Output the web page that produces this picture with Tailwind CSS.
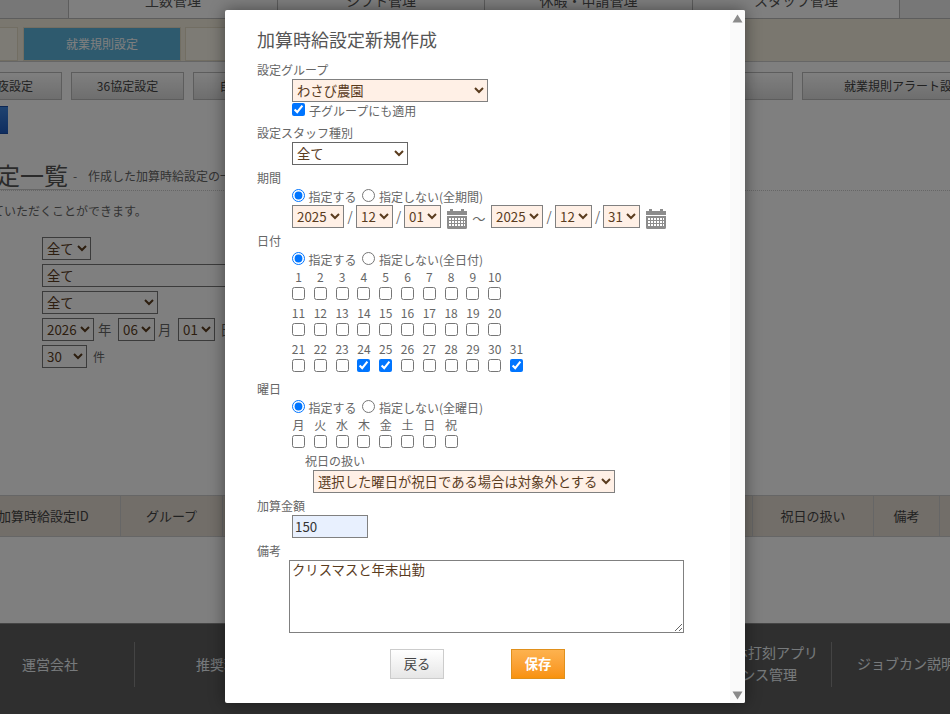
<!DOCTYPE html>
<html lang="ja">
<head>
    <meta charset="UTF-8">
    <meta name="viewport" content="width=device-width, initial-scale=1.0">
    <title>加算時給設定新規作成</title>
    <script src="https://cdn.jsdelivr.net/npm/@tailwindcss/browser@4"></script>
</head>
<body class="bg-white text-[#666] font-['Noto_Sans_CJK_JP','Noto_Sans',sans-serif] text-xs">
<div class="relative w-[950px] h-[714px] overflow-hidden">

    <!-- Page behind the dialog -->
    <div class="flex flex-col h-[714px]">
        <!-- Main nav -->
        <nav class="flex h-[37px] -mt-[18px] shrink-0 border-b border-[#bbb] text-sm text-[#555] bg-[#eee]">
            <div class="w-[68px] shrink-0"></div>
            <div class="w-[209px] shrink-0 flex items-center justify-center bg-white border-l border-[#bbb]">工数管理</div>
            <div class="w-[207px] shrink-0 flex items-center justify-center bg-white border-l border-[#bbb]">シフト管理</div>
            <div class="w-[208px] shrink-0 flex items-center justify-center bg-white border-l border-[#bbb]">休暇・申請管理</div>
            <div class="w-[208px] shrink-0 flex items-center justify-center bg-white border-x border-[#bbb]">スタッフ管理</div>
        </nav>

        <!-- Tabs -->
        <div class="flex h-[43px] shrink-0 items-end gap-[5px] -ml-[139px] bg-[#f5efdf] border-b border-[#ccc]">
            <div class="w-[157px] h-[34px] shrink-0 bg-[#fbf7ea] border border-[#e4dcc6]"></div>
            <div class="w-[158px] h-[34px] shrink-0 flex items-center justify-center bg-[#5cb4dc] text-white border border-[#e4dcc6] text-xs">就業規則設定</div>
            <div class="w-[158px] h-[34px] shrink-0 -ml-[1px] bg-[#fbf7ea] border border-[#e4dcc6]"></div>
        </div>

        <!-- Sub menu -->
        <div class="flex gap-[9px] -ml-[51px] mt-[10px] shrink-0 text-[#444]">
            <div class="w-[113px] h-[28px] shrink-0 flex items-center justify-center border border-[#bbb] bg-gradient-to-b from-white to-[#ddd]"><span class="pl-[7px] whitespace-nowrap">深夜設定</span></div>
            <div class="w-[113px] h-[28px] shrink-0 flex items-center justify-center border border-[#bbb] bg-gradient-to-b from-white to-[#ddd]">36協定設定</div>
            <div class="w-[113px] h-[28px] shrink-0 flex items-center justify-center border border-[#bbb] bg-gradient-to-b from-white to-[#ddd]"><span class="pl-[12px] whitespace-nowrap">自動休憩設定</span></div>
            <div class="w-[478px] h-[28px] shrink-0 border border-[#bbb] bg-gradient-to-b from-white to-[#ddd]"></div>
            <div class="w-[204px] h-[28px] shrink-0 flex items-center justify-center border border-[#bbb] bg-gradient-to-b from-white to-[#ddd]">就業規則アラート設定</div>
        </div>

        <div class="w-[8px] h-[28px] mt-[6px] shrink-0 bg-gradient-to-b from-[#3f86e0] to-[#1f5cc0] border-y border-[#1b4fa8]"></div>

        <!-- Heading -->
        <div class="flex items-end h-[39px] mt-[18px] -ml-[124px] shrink-0 border-b border-dotted border-[#ccc] w-[1074px]">
            <h1 class="text-2xl text-[#555] h-[39px] leading-[47px] w-[194px] shrink-0 border-b border-[#ccc] whitespace-nowrap">加算時給設定一覧</h1>
            <span class="w-[18px] h-[38px] leading-[48px] pl-[3px] shrink-0">-</span>
            <span class="h-[38px] leading-[48px] whitespace-nowrap">作成した加算時給設定の一覧です。</span>
        </div>
        <p class="mt-[11px] -ml-[8px] h-[18px] leading-[18px] shrink-0 whitespace-nowrap">ていただくことができます。</p>

        <!-- Search -->
        <div class="ml-[42px] mt-[17px] flex flex-col gap-[4px] shrink-0 items-start">
            <select class="w-[49px] h-[23px] border border-[#777] text-[13.333px] text-[#5a3c1e]"><option>全て</option></select>
            <select class="w-[300px] h-[23px] border border-[#777] text-[13.333px] text-[#5a3c1e]"><option>全て</option></select>
            <select class="w-[116px] h-[23px] border border-[#777] text-[13.333px] text-[#5a3c1e]"><option>全て</option></select>
            <div class="flex items-center h-[23px]">
                <select class="w-[52px] h-[23px] border border-[#777] text-[13.333px] text-[#5a3c1e]"><option>2026</option></select>
                <span class="w-[24px] pl-[4px] text-[13.333px]">年</span>
                <select class="w-[37px] h-[23px] border border-[#777] text-[13.333px] text-[#5a3c1e]"><option>06</option></select>
                <span class="w-[23px] pl-[3px] text-[13.333px]">月</span>
                <select class="w-[37px] h-[23px] border border-[#777] text-[13.333px] text-[#5a3c1e]"><option>01</option></select>
                <span class="w-[24px] pl-[5px] text-[13.333px]">日</span>
            </div>
            <div class="flex items-center h-[23px]">
                <select class="w-[45px] h-[23px] border border-[#777] text-[13.333px] text-[#5a3c1e]"><option>30</option></select>
                <span class="w-[24px] text-center">件</span>
            </div>
        </div>

        <!-- Table header -->
        <div class="flex h-[42px] mt-[127px] shrink-0 bg-[#e4dcd2] border-y border-[#ccc] text-[13px] text-[#444]">
            <div class="w-[121px] shrink-0 flex items-center border-r border-[#ccc] whitespace-nowrap"><span class="-ml-[2px]">加算時給設定ID</span></div>
            <div class="w-[102px] shrink-0 flex items-center justify-center border-r border-[#ccc]">グループ</div>
            <div class="w-[530px] shrink-0 border-r border-[#ccc]"></div>
            <div class="w-[121px] shrink-0 flex items-center justify-center border-r border-[#ccc]">祝日の扱い</div>
            <div class="w-[66px] shrink-0 flex items-center justify-center border-r border-[#ccc]">備考</div>
        </div>

        <!-- Footer -->
        <footer class="flex items-start h-[91px] pt-[18px] mt-[86px] shrink-0 bg-[#5f5f5f] border-t border-[#8a8a8a] text-sm text-[#eef4f8] whitespace-nowrap">
            <div class="w-[135px] h-[45px] shrink-0 flex items-center pl-[22px] pb-[2px] border-r border-[#888]">運営会社</div>
            <div class="w-[697px] h-[45px] shrink-0 flex items-center justify-between border-r border-[#888]">
                <span class="pl-[61px] pb-[2px]">推奨環境</span>
                <div class="flex flex-col items-end pr-[13px] pb-[4px] leading-[22px]">
                    <span>スマホ打刻アプリ</span>
                    <span class="pr-[21px]">ライセンス管理</span>
                </div>
            </div>
            <div class="h-[45px] leading-[43px] pl-[25px]">ジョブカン説明</div>
        </footer>
    </div>

    <!-- Overlay -->
    <div class="absolute inset-0 bg-black/50"></div>

    <!-- Dialog -->
    <div class="absolute left-[225px] top-[10px] w-[520px] h-[693px] bg-white rounded-[2px] shadow-[0_0_16px_rgba(0,0,0,0.45)] overflow-hidden">
        <!-- Scrollbar -->
        <div class="absolute right-0 top-0 bottom-0 w-[15px] bg-[#fafafa]">
            <svg class="absolute left-[2px] top-[4px]" width="11" height="9" viewBox="0 0 11 9"><path d="M5.5 0.5L10.5 8.500H0.5Z" fill="#8a8a8a"/></svg>
            <svg class="absolute left-[2px] bottom-[3px]" width="11" height="9" viewBox="0 0 11 9"><path d="M0.5 0.5H10.5L5.5 8.500Z" fill="#8a8a8a"/></svg>
        </div>

        <div class="pl-[32px] pt-[17px] flex flex-col items-start">
            <h2 class="h-[26px] leading-[24px] text-lg text-[#555]">加算時給設定新規作成</h2>

            <!-- Group -->
            <label class="h-[18px] leading-[18px] mt-[8px]">設定グループ</label>
            <select class="ml-[35px] w-[196px] h-[23px] border border-[#808080] bg-[#fff0e6] text-[13.333px] text-[#5a3c1e]"><option>わさび農園</option></select>
            <div class="ml-[35px] flex items-start h-[18px]">
                <input type="checkbox" checked class="mt-[1px] w-[13px] h-[13px]">
                <span class="ml-[4px] leading-[18px]">子グループにも適用</span>
            </div>

            <!-- Staff type -->
            <label class="h-[18px] leading-[18px] mt-[4px]">設定スタッフ種別</label>
            <select class="ml-[35px] w-[116px] h-[23px] border border-[#666] text-[13.333px] text-[#5a3c1e]"><option>全て</option></select>

            <!-- Period -->
            <label class="h-[18px] leading-[18px] mt-[4px]">期間</label>
            <div class="ml-[35px] flex items-start h-[18px] leading-[20px]">
                <input type="radio" name="period" checked class="mt-[2px] w-[13px] h-[13px]">
                <span class="ml-[3.5px]">指定する</span>
                <input type="radio" name="period" class="ml-[5.5px] mt-[2px] w-[13px] h-[13px]">
                <span class="ml-[4px]">指定しない(全期間)</span>
            </div>
            <div class="ml-[35px] flex items-start h-[23px] text-[13.333px]">
                <select class="w-[52px] h-[23px] border border-[#808080] bg-[#fff0e6] text-[#5a3c1e]"><option>2025</option></select>
                <span class="w-[12px] h-[23px] leading-[23px] text-center">/</span>
                <select class="w-[37px] h-[23px] border border-[#808080] bg-[#fff0e6] text-[#5a3c1e]"><option>12</option></select>
                <span class="w-[11px] h-[23px] leading-[23px] text-center">/</span>
                <select class="w-[37px] h-[23px] border border-[#808080] bg-[#fff0e6] text-[#5a3c1e]"><option>01</option></select>
                <svg class="ml-[6px] mt-[3px] shrink-0" width="20" height="21" viewBox="0 0 20 21"><path fill="#8c8c8c" fill-rule="evenodd" d="M0 3h3V1h3v2h8V1h3v2h3v4H0zM0 8h20v11.500a1.500 1.500 0 0 1-1.500 1.500H1.500A1.500 1.500 0 0 1 0 19.500zM2 10v2h2v-2zM5 10v2h2v-2zM8 10v2h2v-2zM11 10v2h2v-2zM14 10v2h2v-2zM17 10v2h1v-2zM2 13v2h2v-2zM5 13v2h2v-2zM8 13v2h2v-2zM11 13v2h2v-2zM14 13v2h2v-2zM17 13v2h1v-2zM2 16v2h2v-2zM5 16v2h2v-2zM8 16v2h2v-2zM11 16v2h2v-2zM14 16v2h2v-2zM17 16v2h1v-2z"/></svg>
                <span class="w-[24px] h-[23px] leading-[27px] text-center">～</span>
                <select class="w-[52px] h-[23px] border border-[#808080] bg-[#fff0e6] text-[#5a3c1e]"><option>2025</option></select>
                <span class="w-[12px] h-[23px] leading-[23px] text-center">/</span>
                <select class="w-[37px] h-[23px] border border-[#808080] bg-[#fff0e6] text-[#5a3c1e]"><option>12</option></select>
                <span class="w-[11px] h-[23px] leading-[23px] text-center">/</span>
                <select class="w-[37px] h-[23px] border border-[#808080] bg-[#fff0e6] text-[#5a3c1e]"><option>31</option></select>
                <svg class="ml-[6px] mt-[3px] shrink-0" width="20" height="21" viewBox="0 0 20 21"><path fill="#8c8c8c" fill-rule="evenodd" d="M0 3h3V1h3v2h8V1h3v2h3v4H0zM0 8h20v11.500a1.500 1.500 0 0 1-1.500 1.500H1.500A1.500 1.500 0 0 1 0 19.500zM2 10v2h2v-2zM5 10v2h2v-2zM8 10v2h2v-2zM11 10v2h2v-2zM14 10v2h2v-2zM17 10v2h1v-2zM2 13v2h2v-2zM5 13v2h2v-2zM8 13v2h2v-2zM11 13v2h2v-2zM14 13v2h2v-2zM17 13v2h1v-2zM2 16v2h2v-2zM5 16v2h2v-2zM8 16v2h2v-2zM11 16v2h2v-2zM14 16v2h2v-2zM17 16v2h1v-2z"/></svg>
            </div>

            <!-- Days -->
            <label class="h-[18px] leading-[18px] mt-[4px]">日付</label>
            <div class="ml-[35px] flex items-start h-[18px] leading-[20px]">
                <input type="radio" name="days" checked class="mt-[2px] w-[13px] h-[13px]">
                <span class="ml-[3.5px]">指定する</span>
                <input type="radio" name="days" class="ml-[5.5px] mt-[2px] w-[13px] h-[13px]">
                <span class="ml-[4px]">指定しない(全日付)</span>
            </div>
            <div class="ml-[35px] flex gap-[8.8px] h-[36px]">
                <div class="w-[13px] flex flex-col items-center"><span class="h-[19px] leading-[17px]">1</span><input type="checkbox" class="w-[13px] h-[13px] shrink-0"></div>
                <div class="w-[13px] flex flex-col items-center"><span class="h-[19px] leading-[17px]">2</span><input type="checkbox" class="w-[13px] h-[13px] shrink-0"></div>
                <div class="w-[13px] flex flex-col items-center"><span class="h-[19px] leading-[17px]">3</span><input type="checkbox" class="w-[13px] h-[13px] shrink-0"></div>
                <div class="w-[13px] flex flex-col items-center"><span class="h-[19px] leading-[17px]">4</span><input type="checkbox" class="w-[13px] h-[13px] shrink-0"></div>
                <div class="w-[13px] flex flex-col items-center"><span class="h-[19px] leading-[17px]">5</span><input type="checkbox" class="w-[13px] h-[13px] shrink-0"></div>
                <div class="w-[13px] flex flex-col items-center"><span class="h-[19px] leading-[17px]">6</span><input type="checkbox" class="w-[13px] h-[13px] shrink-0"></div>
                <div class="w-[13px] flex flex-col items-center"><span class="h-[19px] leading-[17px]">7</span><input type="checkbox" class="w-[13px] h-[13px] shrink-0"></div>
                <div class="w-[13px] flex flex-col items-center"><span class="h-[19px] leading-[17px]">8</span><input type="checkbox" class="w-[13px] h-[13px] shrink-0"></div>
                <div class="w-[13px] flex flex-col items-center"><span class="h-[19px] leading-[17px]">9</span><input type="checkbox" class="w-[13px] h-[13px] shrink-0"></div>
                <div class="w-[13px] flex flex-col items-center"><span class="h-[19px] leading-[17px]">10</span><input type="checkbox" class="w-[13px] h-[13px] shrink-0"></div>
            </div>
            <div class="ml-[35px] flex gap-[8.8px] h-[36px]">
                <div class="w-[13px] flex flex-col items-center"><span class="h-[19px] leading-[17px]">11</span><input type="checkbox" class="w-[13px] h-[13px] shrink-0"></div>
                <div class="w-[13px] flex flex-col items-center"><span class="h-[19px] leading-[17px]">12</span><input type="checkbox" class="w-[13px] h-[13px] shrink-0"></div>
                <div class="w-[13px] flex flex-col items-center"><span class="h-[19px] leading-[17px]">13</span><input type="checkbox" class="w-[13px] h-[13px] shrink-0"></div>
                <div class="w-[13px] flex flex-col items-center"><span class="h-[19px] leading-[17px]">14</span><input type="checkbox" class="w-[13px] h-[13px] shrink-0"></div>
                <div class="w-[13px] flex flex-col items-center"><span class="h-[19px] leading-[17px]">15</span><input type="checkbox" class="w-[13px] h-[13px] shrink-0"></div>
                <div class="w-[13px] flex flex-col items-center"><span class="h-[19px] leading-[17px]">16</span><input type="checkbox" class="w-[13px] h-[13px] shrink-0"></div>
                <div class="w-[13px] flex flex-col items-center"><span class="h-[19px] leading-[17px]">17</span><input type="checkbox" class="w-[13px] h-[13px] shrink-0"></div>
                <div class="w-[13px] flex flex-col items-center"><span class="h-[19px] leading-[17px]">18</span><input type="checkbox" class="w-[13px] h-[13px] shrink-0"></div>
                <div class="w-[13px] flex flex-col items-center"><span class="h-[19px] leading-[17px]">19</span><input type="checkbox" class="w-[13px] h-[13px] shrink-0"></div>
                <div class="w-[13px] flex flex-col items-center"><span class="h-[19px] leading-[17px]">20</span><input type="checkbox" class="w-[13px] h-[13px] shrink-0"></div>
            </div>
            <div class="ml-[35px] flex gap-[8.8px] h-[36px]">
                <div class="w-[13px] flex flex-col items-center"><span class="h-[19px] leading-[17px]">21</span><input type="checkbox" class="w-[13px] h-[13px] shrink-0"></div>
                <div class="w-[13px] flex flex-col items-center"><span class="h-[19px] leading-[17px]">22</span><input type="checkbox" class="w-[13px] h-[13px] shrink-0"></div>
                <div class="w-[13px] flex flex-col items-center"><span class="h-[19px] leading-[17px]">23</span><input type="checkbox" class="w-[13px] h-[13px] shrink-0"></div>
                <div class="w-[13px] flex flex-col items-center"><span class="h-[19px] leading-[17px]">24</span><input type="checkbox" checked class="w-[13px] h-[13px] shrink-0"></div>
                <div class="w-[13px] flex flex-col items-center"><span class="h-[19px] leading-[17px]">25</span><input type="checkbox" checked class="w-[13px] h-[13px] shrink-0"></div>
                <div class="w-[13px] flex flex-col items-center"><span class="h-[19px] leading-[17px]">26</span><input type="checkbox" class="w-[13px] h-[13px] shrink-0"></div>
                <div class="w-[13px] flex flex-col items-center"><span class="h-[19px] leading-[17px]">27</span><input type="checkbox" class="w-[13px] h-[13px] shrink-0"></div>
                <div class="w-[13px] flex flex-col items-center"><span class="h-[19px] leading-[17px]">28</span><input type="checkbox" class="w-[13px] h-[13px] shrink-0"></div>
                <div class="w-[13px] flex flex-col items-center"><span class="h-[19px] leading-[17px]">29</span><input type="checkbox" class="w-[13px] h-[13px] shrink-0"></div>
                <div class="w-[13px] flex flex-col items-center"><span class="h-[19px] leading-[17px]">30</span><input type="checkbox" class="w-[13px] h-[13px] shrink-0"></div>
                <div class="w-[13px] flex flex-col items-center"><span class="h-[19px] leading-[17px]">31</span><input type="checkbox" checked class="w-[13px] h-[13px] shrink-0"></div>
            </div>

            <!-- Weekdays -->
            <label class="h-[18px] leading-[18px] mt-[4px]">曜日</label>
            <div class="ml-[35px] flex items-start h-[18px] leading-[20px]">
                <input type="radio" name="week" checked class="mt-[2px] w-[13px] h-[13px]">
                <span class="ml-[3.5px]">指定する</span>
                <input type="radio" name="week" class="ml-[5.5px] mt-[2px] w-[13px] h-[13px]">
                <span class="ml-[4px]">指定しない(全曜日)</span>
            </div>
            <div class="ml-[35px] flex gap-[8.8px] h-[32px]">
                <div class="w-[13px] flex flex-col items-center"><span class="h-[19px] leading-[17px]">月</span><input type="checkbox" class="w-[13px] h-[13px] shrink-0"></div>
                <div class="w-[13px] flex flex-col items-center"><span class="h-[19px] leading-[17px]">火</span><input type="checkbox" class="w-[13px] h-[13px] shrink-0"></div>
                <div class="w-[13px] flex flex-col items-center"><span class="h-[19px] leading-[17px]">水</span><input type="checkbox" class="w-[13px] h-[13px] shrink-0"></div>
                <div class="w-[13px] flex flex-col items-center"><span class="h-[19px] leading-[17px]">木</span><input type="checkbox" class="w-[13px] h-[13px] shrink-0"></div>
                <div class="w-[13px] flex flex-col items-center"><span class="h-[19px] leading-[17px]">金</span><input type="checkbox" class="w-[13px] h-[13px] shrink-0"></div>
                <div class="w-[13px] flex flex-col items-center"><span class="h-[19px] leading-[17px]">土</span><input type="checkbox" class="w-[13px] h-[13px] shrink-0"></div>
                <div class="w-[13px] flex flex-col items-center"><span class="h-[19px] leading-[17px]">日</span><input type="checkbox" class="w-[13px] h-[13px] shrink-0"></div>
                <div class="w-[13px] flex flex-col items-center"><span class="h-[19px] leading-[17px]">祝</span><input type="checkbox" class="w-[13px] h-[13px] shrink-0"></div>
            </div>
            <label class="h-[18px] leading-[18px] mt-[4px] ml-[48px]">祝日の扱い</label>
            <select class="ml-[56px] w-[302px] h-[23px] border border-[#808080] bg-[#fff0e6] text-[13.333px] text-[#5a3c1e]"><option>選択した曜日が祝日である場合は対象外とする</option></select>

            <!-- Amount -->
            <label class="h-[18px] leading-[18px] mt-[4px]">加算金額</label>
            <input type="text" value="150" class="ml-[35px] w-[76px] h-[23px] px-[2px] border border-[#808080] bg-[#e8f0fe] text-[13.333px] text-[#333]">

            <!-- Note -->
            <label class="h-[18px] leading-[18px] mt-[4px]">備考</label>
            <textarea class="ml-[32px] w-[395px] h-[73px] px-[2px] py-0 border border-[#808080] text-[13.333px] text-[#5a3c1e]">クリスマスと年末出勤</textarea>

            <!-- Actions -->
            <div class="ml-[133px] mt-[16px] flex gap-[67px]">
                <button class="w-[54px] h-[30px] border border-[#ccc] bg-gradient-to-b from-white to-[#e6e6e6] text-[13.333px] text-[#444]">戻る</button>
                <button class="w-[54px] h-[30px] border border-[#e0901c] bg-gradient-to-b from-[#fdb24e] to-[#f8920a] text-[13.333px] font-bold text-white">保存</button>
            </div>
        </div>
    </div>
</div>
</body>
</html>
